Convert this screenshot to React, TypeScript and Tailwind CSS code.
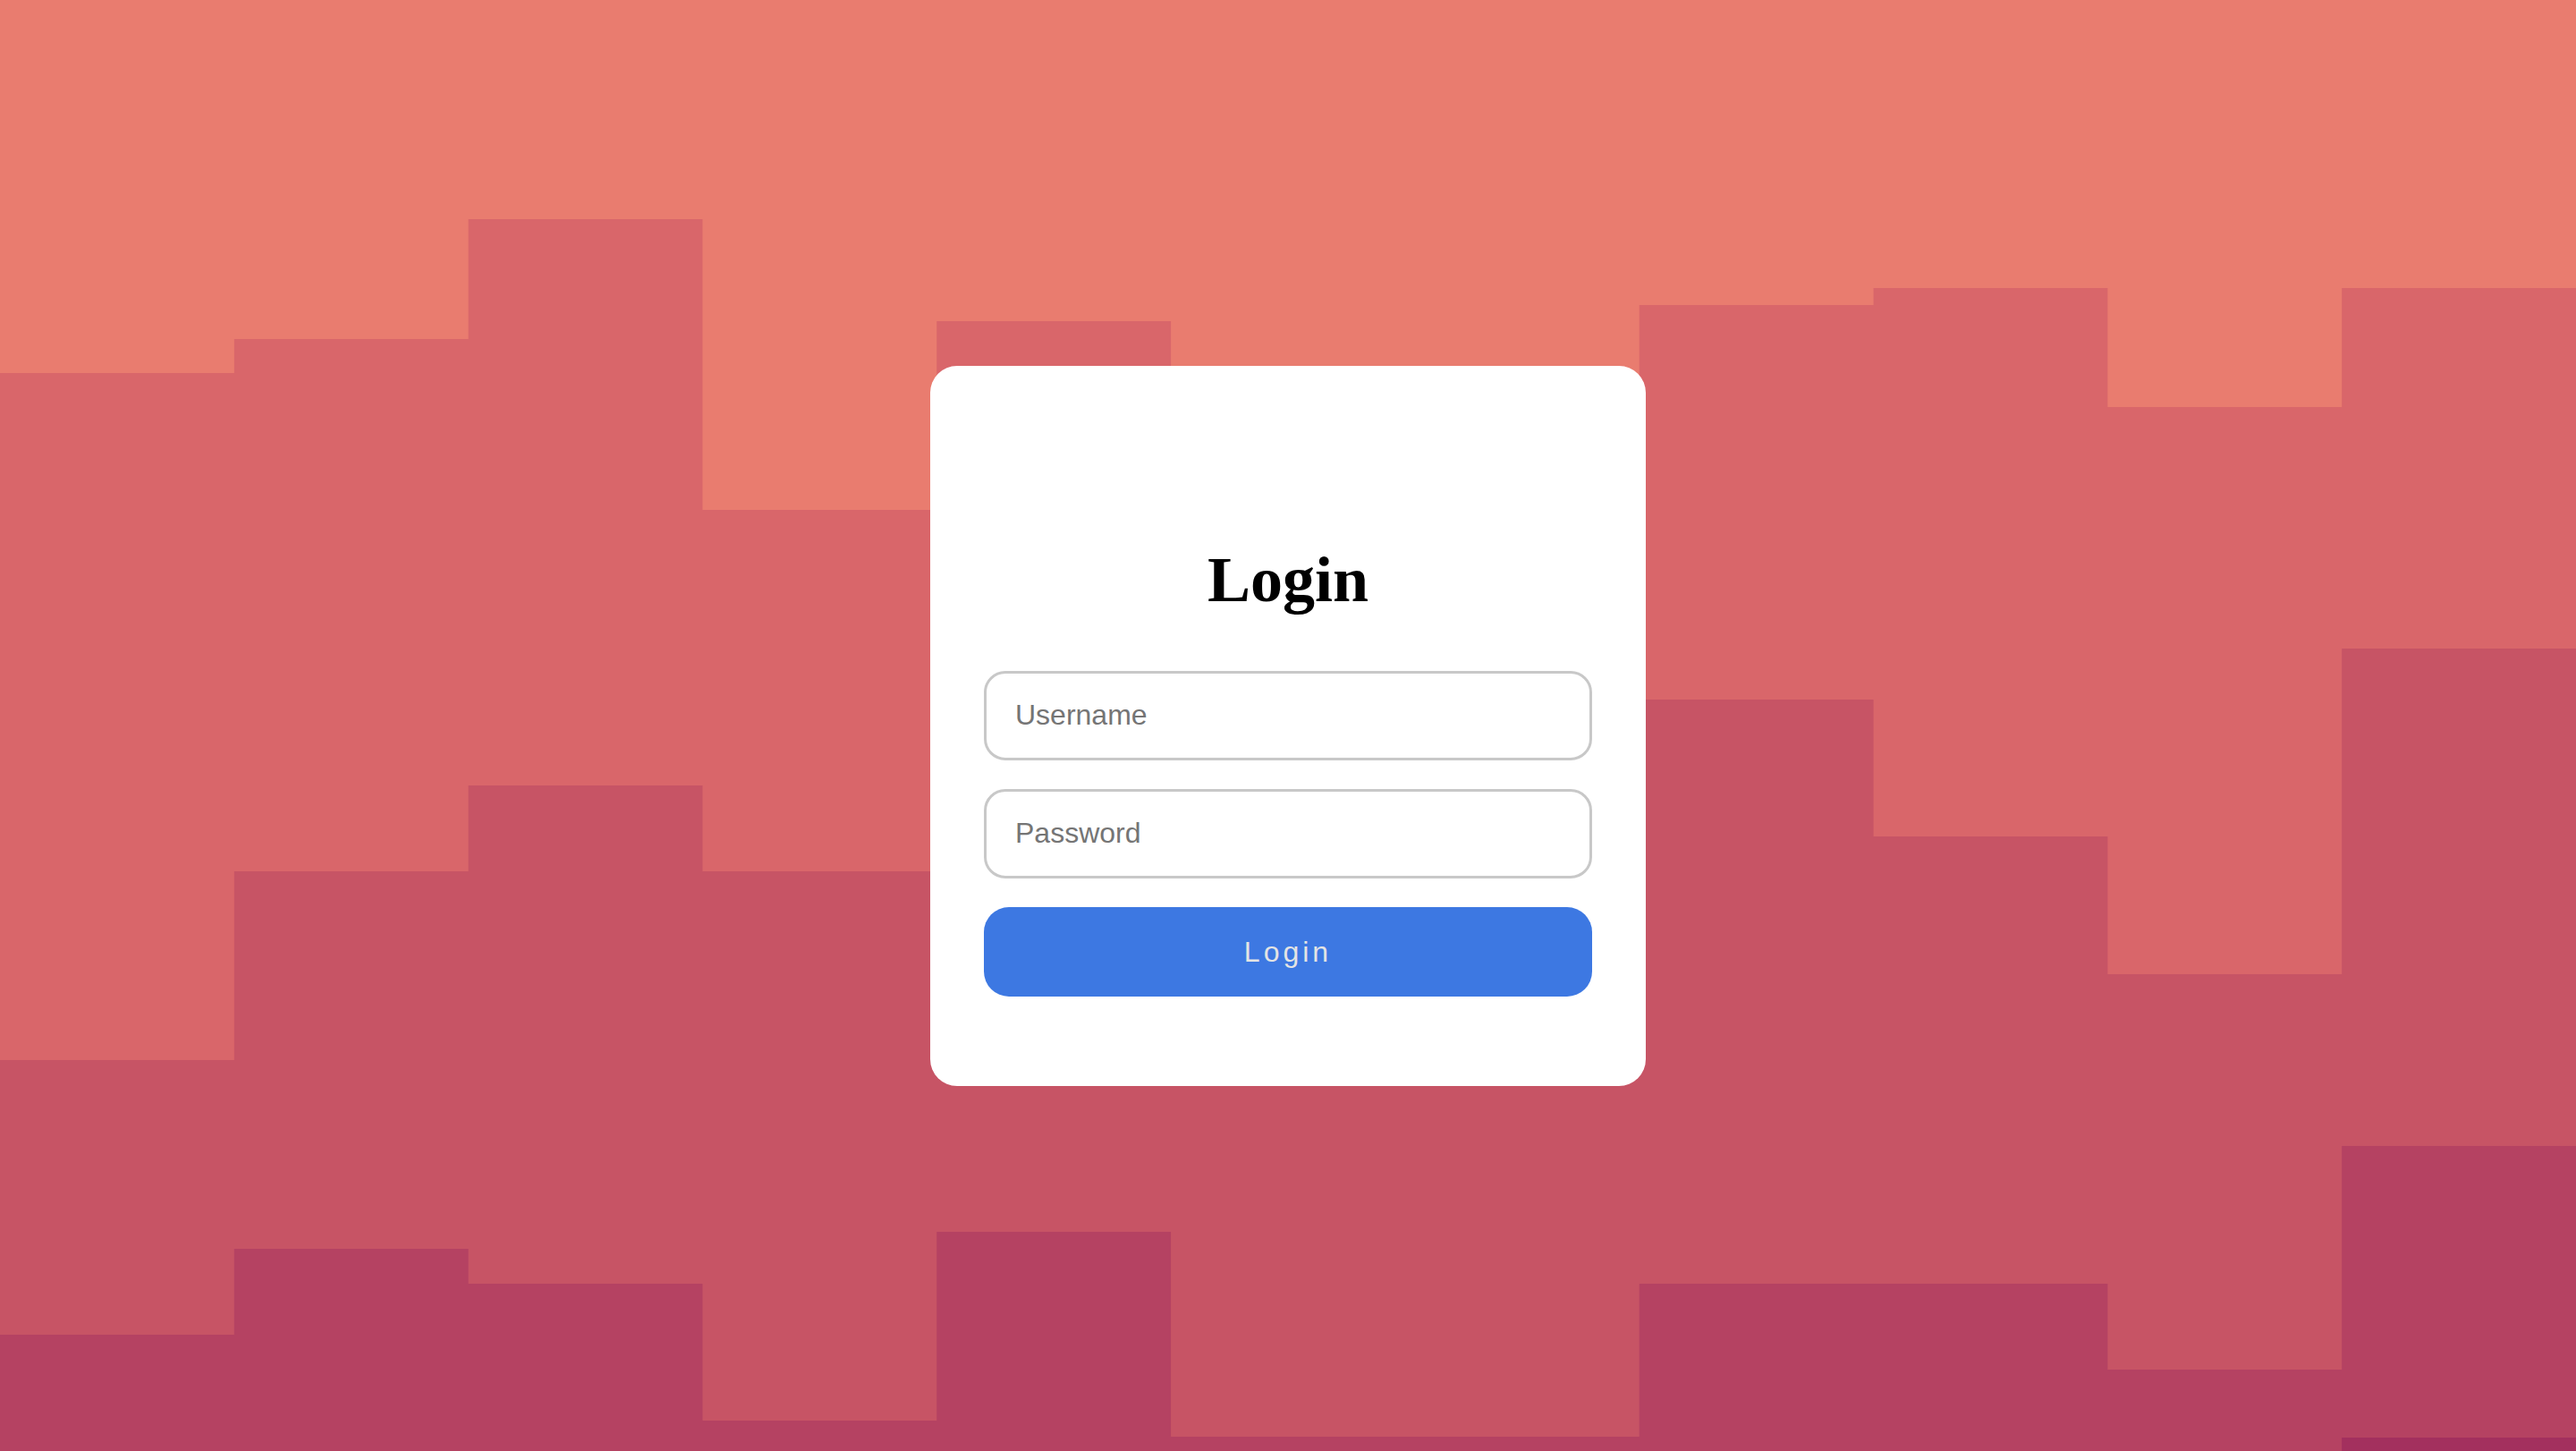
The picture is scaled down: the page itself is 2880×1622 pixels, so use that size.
const cols = 11
const colW = 2880 / cols

// step heights (per column) where each darker layer begins
const layers = [
  {
    fill: '#d9666a',
    tops: [417, 379, 245, 570, 359, 520, 450, 341, 322, 455, 322],
  },
  {
    fill: '#c75465',
    tops: [1185, 974, 878, 974, 1100, 1000, 900, 782, 935, 1089, 725],
  },
  {
    fill: '#b54262',
    tops: [1492, 1396, 1435, 1588, 1377, 1606, 1606, 1435, 1435, 1531, 1281],
  },
  {
    fill: '#a3305e',
    tops: [1700, 1700, 1700, 1700, 1700, 1700, 1700, 1700, 1700, 1700, 1607],
  },
]

function stepPath(tops: number[]) {
  let d = `M0 1622 L0 ${tops[0]}`
  tops.forEach((t, i) => {
    const x0 = i * colW
    const x1 = (i + 1) * colW
    d += ` L${x0} ${t} L${x1} ${t}`
  })
  return d + ' L2880 1622 Z'
}

function StepsBackground() {
  return (
    <svg
      className="absolute inset-0 h-full w-full"
      viewBox="0 0 2880 1622"
      preserveAspectRatio="none"
    >
      <rect width="2880" height="1622" fill="#e97c6f" />
      {layers.map((layer) => (
        <path key={layer.fill} d={stepPath(layer.tops)} fill={layer.fill} />
      ))}
    </svg>
  )
}

export default function App() {
  return (
    <div className="relative flex h-screen w-full items-center justify-center overflow-hidden">
      <StepsBackground />
      <form
        className="relative w-[800px] rounded-[30px] bg-white px-[60px] pt-[203px] pb-[100px]"
        onSubmit={(e) => e.preventDefault()}
      >
        <h1 className="text-center text-[72px] leading-none font-bold text-black [font-family:'Liberation_Serif',serif]">
          Login
        </h1>
        <div className="mt-[66px] flex flex-col gap-[32px] [font-family:'Liberation_Sans',Arial,sans-serif]">
          <input
            type="text"
            placeholder="Username"
            className="h-[100px] w-full rounded-[24px] border-[3px] border-[#c8c8c8] bg-white px-[32px] text-[32px] text-black outline-none placeholder:text-[#757575]"
          />
          <input
            type="password"
            placeholder="Password"
            className="h-[100px] w-full rounded-[24px] border-[3px] border-[#c8c8c8] bg-white px-[32px] text-[32px] text-black outline-none placeholder:text-[#757575]"
          />
          <button
            type="submit"
            className="h-[100px] w-full rounded-[28px] bg-[#3d78e2] text-[32px] tracking-[4px] text-[#e4e4e4]"
          >
            Login
          </button>
        </div>
      </form>
    </div>
  )
}
